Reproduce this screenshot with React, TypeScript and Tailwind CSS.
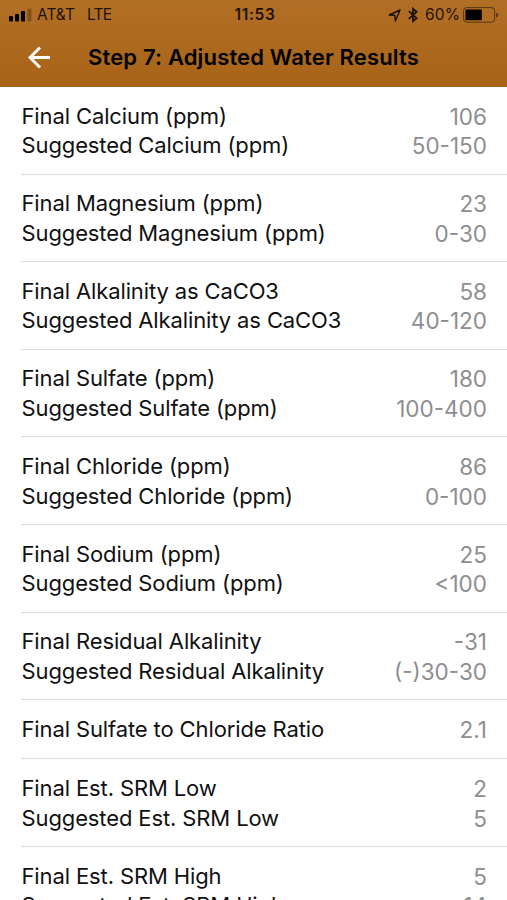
import clsx from 'clsx';

interface ResultRow {
  lines: [label: string, value: string][];
}

const rows: ResultRow[] = [
  { lines: [['Final Calcium (ppm)', '106'], ['Suggested Calcium (ppm)', '50-150']] },
  { lines: [['Final Magnesium (ppm)', '23'], ['Suggested Magnesium (ppm)', '0-30']] },
  { lines: [['Final Alkalinity as CaCO3', '58'], ['Suggested Alkalinity as CaCO3', '40-120']] },
  { lines: [['Final Sulfate (ppm)', '180'], ['Suggested Sulfate (ppm)', '100-400']] },
  { lines: [['Final Chloride (ppm)', '86'], ['Suggested Chloride (ppm)', '0-100']] },
  { lines: [['Final Sodium (ppm)', '25'], ['Suggested Sodium (ppm)', '<100']] },
  { lines: [['Final Residual Alkalinity', '-31'], ['Suggested Residual Alkalinity', '(-)30-30']] },
  { lines: [['Final Sulfate to Chloride Ratio', '2.1']] },
  { lines: [['Final Est. SRM Low', '2'], ['Suggested Est. SRM Low', '5']] },
  { lines: [['Final Est. SRM High', '5'], ['Suggested Est. SRM High', '14']] },
];

function SignalIcon() {
  return (
    <svg width="23" height="14" viewBox="0 0 23 14">
      <rect x="0" y="8" width="4" height="5.5" rx="1" />
      <rect x="6" y="6" width="4" height="7.5" rx="1" />
      <rect x="12" y="3" width="4" height="10.5" rx="1" />
      <rect x="18.5" y="0.5" width="4" height="13" rx="1" opacity="0.25" />
    </svg>
  );
}

function LocationIcon() {
  return (
    <svg width="13" height="13" viewBox="0 0 13 13" fill="none" stroke="currentColor" strokeWidth="1.4" strokeLinejoin="round">
      <path d="M12 1 1.2 6l5.6.2.6 5.8z" />
    </svg>
  );
}

function BluetoothIcon() {
  return (
    <svg width="10" height="16" viewBox="0 0 10 16" fill="none" stroke="currentColor" strokeWidth="1.8">
      <path d="M.8 4.2 8.6 11.2 5 14.2V1.8l3.6 3L.8 11.8" />
    </svg>
  );
}

function BatteryIcon() {
  return (
    <svg width="36" height="16" viewBox="0 0 36 16">
      <rect x="0.6" y="0.6" width="31" height="14.6" rx="3" fill="none" stroke="#000" strokeOpacity="0.5" strokeWidth="1" />
      <rect x="2.5" y="2.6" width="16.3" height="10.6" rx="0.8" fill="#000" />
      <path d="M33.2 5.4c1.6.5 2.2 1.4 2.2 2.5s-.6 2-2.2 2.5z" opacity="0.5" />
    </svg>
  );
}

function StatusBar() {
  return (
    <div className="grid h-7 grid-cols-[1fr_auto_1fr] items-center pt-0.5 pr-2 pl-[9px] text-[15.5px] leading-none text-black/85">
      <div className="flex items-center">
        <SignalIcon />
        <span className="ml-[5px]">AT&amp;T</span>
        <span className="ml-3 tracking-[-0.7px]">LTE</span>
      </div>
      <span className="pl-0.5 text-[15.5px] font-semibold tracking-[0.7px]">11:53</span>
      <div className="flex items-center justify-end">
        <LocationIcon />
        <span className="ml-[7px]"><BluetoothIcon /></span>
        <span className="mr-[3px] ml-[7px] tracking-[0.1px]">60%</span>
        <BatteryIcon />
      </div>
    </div>
  );
}

function Row({ lines }: ResultRow) {
  return (
    <li className={clsx('ml-[21px] flex shrink-0 flex-col justify-center border-b border-[#dcdcdc] pt-[2px] pr-5 pl-[0.5px]', lines.length > 1 ? 'h-[87.6px]' : 'h-[59.2px]')}>
      {lines.map(([label, value]) => (
        <div key={label} className="flex justify-between leading-[29.6px]">
          <span className="tracking-[-0.12px]">{label}</span>
          <span className="text-[22.5px] text-[#8e8e90]">{value}</span>
        </div>
      ))}
    </li>
  );
}

export default function App() {
  return (
    <main className="flex h-[900px] w-full flex-col overflow-hidden bg-white font-['Inter',sans-serif] text-[22px] text-[#111]">
      <header className="h-[87px] shrink-0 bg-linear-to-b from-[#b16f25] to-[#a86317]">
        <StatusBar />
        <div className="flex h-[59px] items-center justify-center">
          <svg className="absolute left-7 size-[23px]" viewBox="0 0 23 23" fill="none" stroke="#fff" strokeWidth="3">
            <path d="M22 11.5H2.5M12 1.5l-10 10 10 10" />
          </svg>
          <h1 className="text-[22px] font-semibold tracking-[0.16px] text-black">Step 7: Adjusted Water Results</h1>
        </div>
      </header>
      <ul className="flex flex-col">
        {rows.map(row => <Row key={row.lines[0][0]} lines={row.lines} />)}
      </ul>
    </main>
  );
}
